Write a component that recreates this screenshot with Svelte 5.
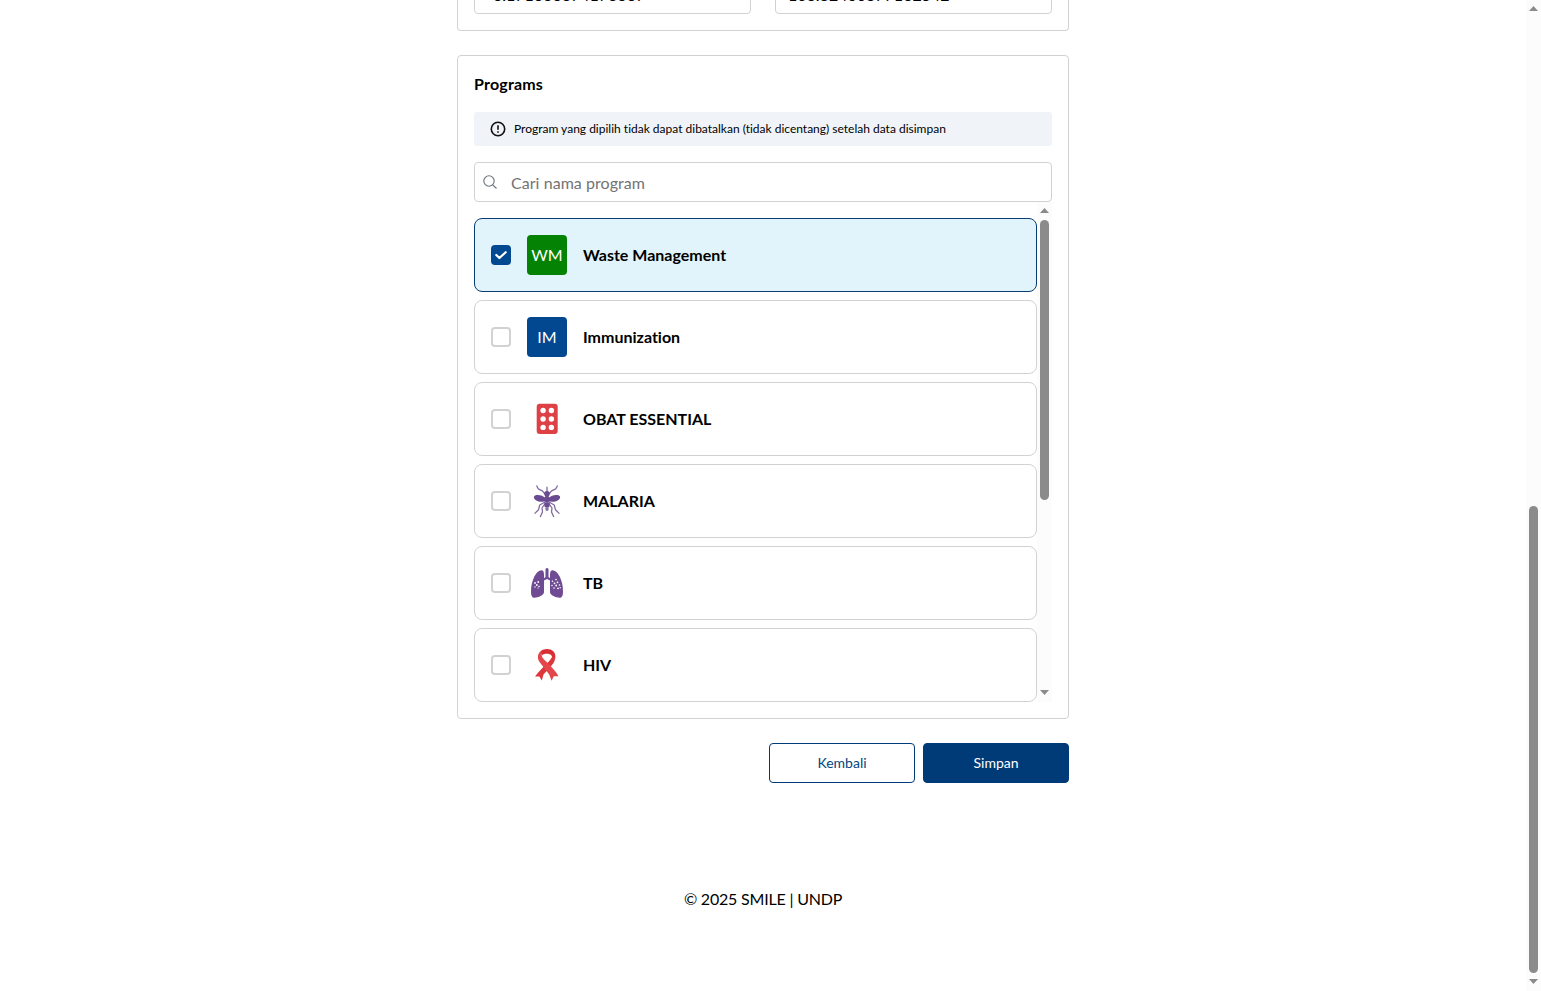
<script lang="ts">
  type Program = { id: string; name: string; initials?: string; color?: string };

  const programs: Program[] = [
    { id: 'wm', name: 'Waste Management', initials: 'WM', color: '#048204' },
    { id: 'im', name: 'Immunization', initials: 'IM', color: '#024890' },
    { id: 'obat', name: 'OBAT ESSENTIAL' },
    { id: 'malaria', name: 'MALARIA' },
    { id: 'tb', name: 'TB' },
    { id: 'hiv', name: 'HIV' },
  ];

  let selected = $state(['wm']);

  function toggle(id: string) {
    selected = selected.includes(id) ? selected.filter((s) => s !== id) : [...selected, id];
  }
</script>

{#snippet scrollbar(kind: string)}
  <div class="scrollbar {kind}" aria-hidden="true">
    <svg class="arrow" viewBox="0 0 9 5"><path d="M4.5 0 9 5H0Z" /></svg>
    <div class="thumb"></div>
    <svg class="arrow down" viewBox="0 0 9 5"><path d="M0 0H9L4.5 5Z" /></svg>
  </div>
{/snippet}

{#snippet programIcon(id: string)}
  <svg class="icon" viewBox="0 0 40 40" aria-hidden="true">
    {#if id === 'obat'}
      <rect x="9.7" y="4.8" width="21" height="30.2" rx="3" fill="#dd4045" />
      {#each [11.5, 20, 28.4] as y}
        <circle cx="16.1" cy={y} r="2.7" fill="#fff" />
        <circle cx="24.4" cy={y} r="2.7" fill="#fff" />
      {/each}
    {:else if id === 'malaria'}
      <g fill="none" stroke="#806b9f" stroke-width="1.3" stroke-linejoin="round">
        <path d="M9.5 4.5 11.2 7.8 15.4 9.8 18 13M30.6 4.5 28.8 7.8 24.6 9.8 22 13M20 5.8V12" />
        <path d="M18 21 12.8 24 11.5 28.8 7.6 32.6M22 21 27.2 24 28.5 28.8 32.4 32.6" />
        <path d="M18.5 22 15 27 15.5 31 13.2 36M21.5 22 25 27 24.5 31 26.8 36" />
      </g>
      <g fill="#6a4a91">
        <circle cx="20" cy="12.8" r="2.8" />
        <path d="M19 17.6C15 13.6 9 13.2 7 15.4 5.8 19.4 13.8 22 19 20ZM21 17.6C25 13.6 31 13.2 33 15.4 34.2 19.4 26.2 22 21 20Z" />
        <ellipse cx="20" cy="18.2" rx="2.7" ry="3.5" />
        <path d="M17.4 21.5H22.6V25.5L20 27 17.4 25.5Z" />
      </g>
      <path d="M18.2 26.2 20 27.2 21.8 26.2 21.2 29.8H18.8Z" fill="#806b9f" />
    {:else if id === 'tb'}
      <g fill="#6f4b93">
        <path d="M14.5 7.2C10 7 4 16 4 28.5 4 33 5.2 34.8 7.5 34.8 11 34.5 17 32.5 17 29V11.5C17 8.5 16 7.3 14.5 7.2Z" />
        <path d="M25.5 7.2C30 7 36 16 36 28.5 36 33 34.8 34.8 32.5 34.8 29 34.5 23 32.5 23 29V11.5C23 8.5 24 7.3 25.5 7.2Z" />
        <path d="M18.5 6Q20 4.2 21.5 6V14L24 16V18L20 16 16 18V16L18.5 14Z" />
      </g>
      <g fill="#fff">
        <circle cx="8" cy="20" r=".9" /><circle cx="11.2" cy="19" r=".9" />
        <circle cx="9.8" cy="22" r=".9" /><circle cx="8" cy="24" r=".7" />
        <circle cx="12" cy="23.5" r=".8" /><circle cx="11" cy="25" r=".6" />
        <circle cx="29" cy="16.6" r=".8" /><circle cx="25.5" cy="18.3" r=".8" />
        <circle cx="30.5" cy="19.3" r=".9" /><circle cx="27.5" cy="20.3" r=".9" />
        <circle cx="25" cy="22.5" r=".8" /><circle cx="29.2" cy="22.5" r=".9" />
        <circle cx="32.5" cy="22" r=".8" /><circle cx="27" cy="25" r=".8" />
        <circle cx="31" cy="25.3" r=".9" /><circle cx="33.2" cy="24.7" r=".7" />
      </g>
    {:else if id === 'hiv'}
      <path d="M25.3 10.5 28 14.5C27 19 20.5 25.2 16.5 29.5L14.8 35.5 12.4 31.5 8 31.5C11.5 26.5 15.8 22.7 20 18.5 22.6 15.7 24.8 13.6 25.3 10.5Z" fill="#dc373b" />
      <path d="M13.5 6.2C17 3.2 23 3.2 26.3 6.2 28.7 8.5 28.7 12 28 14.5L24.6 10.8C23 8.2 16.3 8.2 14.8 10.8Z" fill="#d92f34" />
      <path d="M13.5 6.2C10 9.5 10.2 14 13.3 18L22.2 29.5 24.6 35.7 26.8 31.3H31.5C29 26.5 24 21.5 19.5 16.8 16.3 13.8 14 11.7 14.8 8.5Z" fill="#e4474b" />
    {/if}
  </svg>
{/snippet}

<div class="window">
  <main>
    <section class="card location">
      <div class="field latitude">-6.171666674176667</div>
      <div class="field longitude">106.82400377162542</div>
    </section>

    <section class="card programs">
      <h2>Programs</h2>

      <div class="notice">
        <svg viewBox="0 0 16 16" aria-hidden="true">
          <circle cx="8" cy="8" r="6.7" />
          <path d="M8 4.2V8.8M8 10.3V11.8" />
        </svg>
        <span>Program yang dipilih tidak dapat dibatalkan (tidak dicentang) setelah data disimpan</span>
      </div>

      <label class="search">
        <svg viewBox="0 0 16 16" aria-hidden="true">
          <circle cx="7" cy="7" r="5.2" />
          <path d="M10.8 10.8 14.5 14.5" />
        </svg>
        <input type="text" placeholder="Cari nama program" />
      </label>

      <div class="scroller">
        <div class="list">
          {#each programs as program (program.id)}
            {@const checked = selected.includes(program.id)}
            <button
              class="row"
              class:checked
              role="checkbox"
              aria-checked={checked}
              onclick={() => toggle(program.id)}
            >
              <span class="check">
                {#if checked}
                  <svg viewBox="0 0 20 20"><path d="M5.3 10 8.4 13 14.7 7.2" /></svg>
                {/if}
              </span>
              {#if program.initials}
                <span class="initials" style="background: {program.color}">{program.initials}</span>
              {:else}
                {@render programIcon(program.id)}
              {/if}
              <span class="name">{program.name}</span>
            </button>
          {/each}
        </div>
        {@render scrollbar('inner')}
      </div>
    </section>

    <div class="actions">
      <button class="btn outline">Kembali</button>
      <button class="btn solid">Simpan</button>
    </div>

    <footer>© 2025 SMILE | UNDP</footer>
  </main>
  {@render scrollbar('outer')}
</div>

<style>
  :global(body) {
    background: #fff;
    color: #000;
    font-family: Lato, 'Liberation Sans', sans-serif;
    font-size: 16px;
    font-variant-ligatures: none;
    line-height: 24px;
  }

  .window,
  .window * {
    box-sizing: border-box;
  }

  .window {
    display: flex;
    height: 991px;
    overflow: hidden;
  }

  main {
    flex: 1;
    display: flex;
    flex-direction: column;
    align-items: center;
  }

  .card {
    width: 612px;
    border: 1px solid #d2d2d2;
    border-radius: 4px;
  }

  /* only the bottom edge of this card is scrolled into view */
  .location {
    display: flex;
    align-items: flex-end;
    gap: 24px;
    height: 31px;
    padding: 0 16px 16px;
    border-top: 0;
    border-radius: 0 0 4px 4px;
    overflow: hidden;
  }

  .field {
    flex: none;
    width: 277px;
    height: 40px;
    padding: 8px 12px;
    border: 1px solid #d2d2d2;
    border-radius: 4px;
  }

  .notice,
  .field {
    letter-spacing: 0;
  }

  .programs {
    margin-top: 24px;
    padding: 16px;
    height: 664px;
  }

  h2 {
    margin: 0 0 16px;
    font-size: 16px;
    font-weight: 700;
    letter-spacing: 0.2px;
    line-height: 24px;
  }

  .notice {
    display: flex;
    align-items: center;
    gap: 8px;
    height: 34px;
    padding: 0 16px;
    border-radius: 3px;
    background: #f0f4f9;
    font-size: 12px;
    line-height: 18px;
  }

  .notice svg {
    width: 16px;
    height: 16px;
    fill: none;
    stroke: #111;
    stroke-width: 1.6;
  }

  .search {
    display: flex;
    align-items: center;
    height: 40px;
    margin-top: 16px;
    padding: 0 7px;
    border: 1px solid #d2d2d2;
    border-radius: 4px;
  }

  .search svg {
    width: 16px;
    height: 16px;
    fill: none;
    stroke: #6b737c;
    stroke-width: 1.1;
  }

  .search input {
    flex: 1;
    padding: 2px 0 0;
    margin-left: 13px;
    border: 0;
    outline: 0;
    background: none;
    font: inherit;
    letter-spacing: 0.05px;
  }

  .search input::placeholder {
    color: #737373;
    opacity: 1;
  }

  .scroller {
    display: flex;
    height: 500px;
  }

  .list {
    flex: 1;
    display: flex;
    flex-direction: column;
    gap: 8px;
    padding-top: 16px;
  }

  .row {
    display: flex;
    align-items: center;
    gap: 16px;
    height: 74px;
    padding: 0 16px;
    border: 1px solid #d2d2d2;
    border-radius: 8px;
    background: #fff;
    color: inherit;
    font: inherit;
    font-variant-ligatures: none;
    text-align: left;
  }

  .row.checked {
    border-color: #073d70;
    background: #e1f3fb;
  }

  .check {
    width: 20px;
    height: 20px;
    border: 2px solid #d2d2d2;
    border-radius: 4px;
    background: #fff;
  }

  .checked .check {
    border: 0;
    background: #004990;
  }

  .check svg {
    display: block;
    fill: none;
    stroke: #fff;
    stroke-width: 2.2;
    stroke-linecap: round;
    stroke-linejoin: round;
  }

  .initials {
    width: 40px;
    height: 40px;
    border-radius: 4px;
    color: #fff;
    line-height: 40px;
    text-align: center;
  }

  .icon {
    width: 40px;
    height: 40px;
  }

  .name {
    font-weight: 700;
  }

  .scrollbar {
    display: flex;
    flex: none;
    flex-direction: column;
    align-items: center;
    width: 15px;
    background: #fcfcfc;
  }

  .arrow {
    width: 9px;
    height: 5px;
    fill: #8b8b8b;
  }

  .arrow.down {
    margin-top: auto;
  }

  .thumb {
    width: 9px;
    border-radius: 5px;
    background: #8b8b8b;
  }

  .inner {
    padding: 6px 0 7px;
  }

  .inner .thumb {
    height: 280px;
    margin-top: 7px;
  }

  .outer {
    padding: 6px 0 7px;
  }

  .outer .thumb {
    height: 467px;
    margin-top: 495px;
  }

  .actions {
    display: flex;
    justify-content: flex-end;
    gap: 8px;
    width: 612px;
    margin-top: 24px;
  }

  .btn {
    width: 146px;
    height: 40px;
    padding: 0;
    border: 1px solid #003b78;
    border-radius: 4px;
    font: inherit;
    font-size: 14px;
  }

  .outline {
    background: #fff;
    color: #004680;
  }

  .solid {
    background: #003b78;
    color: #fff;
  }

  footer {
    margin-top: 104px;
    letter-spacing: -0.2px;
  }
</style>
